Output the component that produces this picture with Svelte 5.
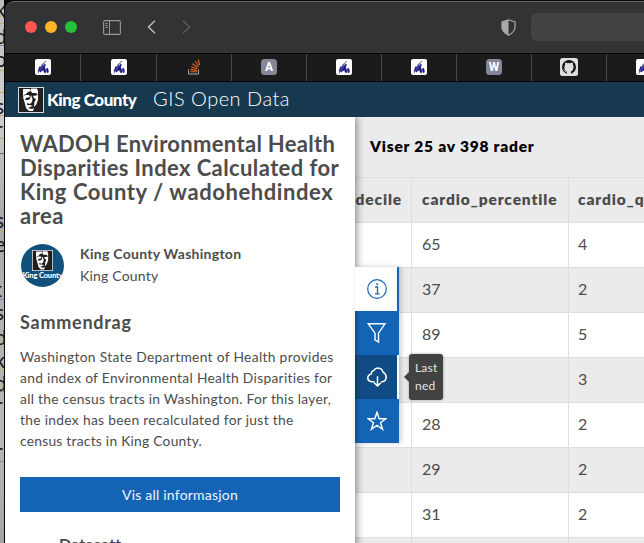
<script>
  const tabs = ['quill', 'quill', 'stack', 'A', 'quill', 'quill', 'W', 'github', 'quill'];
  const rows = [['65', '4'], ['37', '2'], ['89', '5'], ['', '3'], ['28', '2'], ['29', '2'], ['31', '2'], ['', '']];
  const summary = [
    ['Washington State Department of Health provides', 0.32],
    ['and index of Environmental Health Disparities for', 0.3],
    ['all the census tracts in Washington. For this layer,', 0.27],
    ['the index has been recalculated for just the', 0.31],
    ['census tracts in King County.', 0.25]
  ];
  const title = [
    ['WADOH Environmental Health', 0.32],
    ['Disparities Index Calculated for', 0.4],
    ['King County / wadohehdindex', 0.57],
    ['area', 0.5]
  ];
  const notes = [['K', 12], ['d', 37], ['o', 60], ['l', 82], ['s', 107], ['r', 130], ['s', 221], ['e', 245], ['t', 290], ['s', 313], ['d', 338], ['k', 361], ['d', 384], ['r', 406], ['r', 452]];
  const rules = [[23, 'y'], [45, 'b'], [70, 'y'], [92, 'y'], [115, 'y'], [138, 'y'], [153, 'g'], [231, 'y'], [299, 'b'], [346, 'y'], [369, 'y'], [391, 'b'], [461, 'b']];
</script>

{#snippet portrait()}
  <svg class="portrait" viewBox="0 0 26 26">
    <rect x=".5" y=".5" width="25" height="25" fill="#211f1d" stroke="#d8dcde" />
    <path d="M5 2H12L13 4 10 5 8 7 6 8 5 10ZM13 1.5H19L20 4 20 8 18 6 14 6 13 4ZM5 10L7 8 11 8 12 10 8 11 7 13 10 13 12 12 13 8 14.5 12 14 15 12 17 9 16 9 18 12 18 15 19 12 20 10 21 14 22 16 21 15 24 11 24 8 21 7 17ZM15 9L20 8 20 13 18 18 16 20 16.5 15 18 12 16 11Z" fill="#fff" />
  </svg>
{/snippet}

<div class="screen">
  <div class="notes">
    {#each notes as [letter, y]}<span style:top="{y - 10}px">{letter}</span>{/each}
    {#each rules as [y, kind]}<i class={kind} style:top="{y}px"></i>{/each}
  </div>
  <div class="window">
    <div class="toolbar">
      <span class="light red"></span><span class="light amber"></span><span class="light green"></span>
      <svg class="sidebar" viewBox="0 0 18 15" fill="none" stroke="#98999b">
        <rect x=".6" y=".6" width="16.8" height="13.8" rx="1.5" stroke-width="1.1" />
        <path d="M6.5 1V14M2.4 3.5H4.7M2.4 5.5H4.7M2.4 7.5H4.7" />
      </svg>
      <svg class="back" viewBox="0 0 9 14" fill="none" stroke="#b9babb" stroke-width="1.5"><path d="M8 .7 1.5 7 8 13.3" /></svg>
      <svg class="forward" viewBox="0 0 9 14" fill="none" stroke="#5a5b5d" stroke-width="1.4"><path d="M1 .7 7.5 7 1 13.3" /></svg>
      <svg class="shield" viewBox="0 0 15 17">
        <path d="M7.5.8 14 3V9Q13.5 13 7.5 16.2 1.5 13 1 9V3Z" fill="none" stroke="#a9aaab" stroke-width="1.2" />
        <path d="M7.5.8V16.2Q1.5 13 1 9V3Z" fill="#a9aaab" />
      </svg>
      <div class="address"></div>
    </div>
    <div class="tabs">
      {#each tabs as tab}
        <div class="tab">
          {#if tab === 'quill'}
            <svg class="fav" viewBox="0 0 16 16">
              <rect width="16" height="16" rx="2" fill="#fff" />
              <path d="M3.5 12.5 5.5 7.5M5 13 8 6M7 11.5 10 5" stroke="#1e1c86" stroke-width="2" fill="none" />
              <path d="M6 6.5 11 2M3 14.5 4 12" stroke="#4a4a9e" stroke-width=".9" />
              <ellipse cx="9.5" cy="11" rx="1.3" ry="3.2" transform="rotate(-12 9.5 11)" fill="#1e1c86" />
              <ellipse cx="12.4" cy="11.5" rx="1.2" ry="2.5" transform="rotate(-10 12.4 11.5)" fill="#1e1c86" />
              <path d="M3 14.5Q5.5 9 9.5 5" stroke="#a9aad6" stroke-width=".5" fill="none" />
            </svg>
          {:else if tab === 'stack'}
            <svg class="fav" viewBox="0 0 16 16" fill="none">
              <path d="M2.5 10.5V15H12.5V10.5" stroke="#a6a7a8" stroke-width="1" />
              <path d="M4.3 12.7H11M4.4 10.4 11 11.4M5 7.7 11.3 9.8M6.5 4.8 12 8.5M9.2 2.3 12.8 7.3M12.2.5 13.7 6" stroke="#e8641b" stroke-width="1.1" />
            </svg>
          {:else if tab === 'github'}
            <svg class="fav git" viewBox="0 0 18 18">
              <rect width="18" height="18" rx="2.5" fill="#dedede" />
              <circle cx="9" cy="9" r="7" fill="#151515" />
              <path d="M7 16.3V13.5Q4.3 12.5 4.4 9.2 4.4 7.6 5.2 6.8 4.8 5.5 5.3 4.4 6.4 4.4 7.5 5.3 9 4.9 10.6 5.3 11.8 4.4 12.8 4.4 13.2 5.5 12.8 6.8 13.7 7.8 13.6 9.2 13.5 12.5 11 13.5V16.3Z" fill="#dedede" />
              <path d="M3.5 11.8Q4.5 12 5 13T7.3 13.9" stroke="#dedede" stroke-width=".8" fill="none" />
            </svg>
          {:else}
            <span class="fav letter">{tab}</span>
          {/if}
        </div>
      {/each}
    </div>
    <header>
      {@render portrait()}
      <b>King County</b>
      <span class="site">GIS Open Data</span>
    </header>
    <main>
      <aside>
        <h1>{#each title as [line, gap]}<span style:letter-spacing="{gap}px">{line}</span>{/each}</h1>
        <div class="owner">
          <div class="avatar">{@render portrait()}<b>King County</b></div>
          <div class="names"><strong>King County Washington</strong><span>King County</span></div>
        </div>
        <h2>Sammendrag</h2>
        <p>{#each summary as [line, gap]}<span style:letter-spacing="{gap}px">{line}</span>{/each}</p>
        <button>Vis all informasjon</button>
        <h3>Datasett</h3>
      </aside>
      <section>
        <div class="count"><span>Viser 25 av 398 rader</span></div>
        <div class="row head"><div class="c1"><span>decile</span></div><div class="c2"><span>cardio_percentile</span></div><div class="c3"><span>cardio_quintile</span></div></div>
        {#each rows as [a, b]}
          <div class="row"><div class="c1"></div><div class="c2">{a}</div><div class="c3">{b}</div></div>
        {/each}
      </section>
      <nav>
        <div class="act info">
          <svg viewBox="0 0 20 20" fill="none" stroke="#1766b8" stroke-width="1.2"><circle cx="10" cy="10" r="9.3" /><path d="M8.2 8H10.5V14.6M8 14.9H12.7" stroke-width="1.3" /><circle cx="10.1" cy="5.2" r=".7" fill="#1766b8" stroke-width=".6" /></svg>
        </div>
        <div class="act"><svg viewBox="0 0 20 20" fill="none" stroke="#fff" stroke-width="1.4"><path d="M1.3.8H18L11.5 10.2V19L8 16.8V10.2Z" /></svg></div>
        <div class="act current"><svg viewBox="0 0 20 20" fill="none" stroke="#fff" stroke-width="1.5"><path d="M7.5 14.7H4.2Q.8 14 .8 11 .8 7.8 4.2 7 4.3 4 7 3.2 8.2 1 11 1 15 1.2 16 5.2 19.2 6.8 19.2 10.5 19 14 15.7 14.7H14M10.5 9.3V19M7.2 15.7 10.5 19 13.8 15.7" /></svg></div>
        <div class="act"><svg viewBox="0 0 20 20" fill="none" stroke="#fff" stroke-width="1.4"><path d="M10 1.2 12.2 7.7H19L13.5 11.7 15.6 18.3 10 14.3 4.4 18.3 6.5 11.7 1 7.7H7.8Z" /></svg></div>
        <div class="tip">Last<br />ned</div>
      </nav>
    </main>
  </div>
</div>

<style>
  :global(body) { overflow: hidden; }
  .screen { width: 644px; height: 543px; overflow: hidden; position: relative; display: flex; background: #080808; font-family: Lato, "Open Sans", sans-serif; color: #4c4c4c; font-variant-ligatures: none; }
  .screen * { box-sizing: border-box; }
  .notes { width: 5px; flex: none; position: relative; overflow: hidden; background: linear-gradient(#bcbcbd, #d0d0d1 20%, #aaaaac 40%, #b9b9bb 80%, #a4a4a6); border-right: 1px solid #050505; }
  .notes span { position: absolute; left: -5px; font: 19px/20px "Noto Sans", sans-serif; color: #151515; }
  .notes i { position: absolute; left: 0; width: 4px; height: 1px; }
  .y { background: #c6a966; }
  .b { background: #8585a6; }
  .g { background: #6c6c6e; }
  .window { width: 639px; height: 543px; flex: none; display: flex; flex-direction: column; border-top: 1px solid #09090a; }
  .toolbar { height: 52px; flex: none; background: #323335; border-top: 1px solid #69696b; border-radius: 9px 0 0; display: flex; align-items: center; padding-left: 20px; }
  .light { width: 12px; height: 12px; border-radius: 50%; margin-right: 8px; margin-top: -1px; }
  .red { background: #fd5650; }
  .amber { background: #fdb32a; }
  .green { background: #25c138; }
  .toolbar svg { flex: none; margin-top: -1px; }
  .sidebar { width: 18px; height: 15px; margin-left: 18px; }
  .back { width: 9px; height: 14px; margin-left: 26px; }
  .forward { width: 9px; height: 14px; margin-left: 26px; }
  .shield { width: 15px; height: 17px; margin-left: 310px; }
  .address { margin-left: 15px; height: 28px; flex: 1; border-radius: 6px 0 0 6px; background: #414244; margin-top: -1px; }
  .tabs { height: 29px; flex: none; display: flex; border: 1px solid #050505; border-width: 1px 0; background: #1b1b1c; overflow: hidden; }
  .tab { flex: none; width: 75px; border-right: 1px solid #49494a; display: flex; align-items: center; justify-content: center; }
  .tab:first-child, .tab:nth-child(2) { width: 76px; }
  .fav { width: 16px; height: 16px; margin-top: -1px; }
  .tab .git { width: 18px; height: 18px; }
  .letter { background: #858696; color: #fff; border-radius: 3.5px; font: bold 12px/16px Roboto, sans-serif; text-align: center; }
  header { height: 35px; flex: none; background: #17394f; color: #fff; display: flex; align-items: center; padding-left: 13px; overflow: hidden; }
  .portrait { width: 26px; height: 26px; flex: none; display: block; }
  header b { font: 900 17px/24px Lato, sans-serif; letter-spacing: -.45px; width: 92px; margin-left: 3px; margin-top: 1px; white-space: nowrap; }
  .site { font-size: 20px; font-weight: 300; line-height: 24px; margin-left: 14px; letter-spacing: .5px; margin-top: -4px; color: #fff; white-space: nowrap; }
  main { flex: 1; display: flex; position: relative; background: #ebebeb; min-height: 0; overflow: hidden; }
  aside { width: 350px; flex: none; background: #fff; padding: 15px 15px 0; position: relative; z-index: 3; box-shadow: 1px 0 8px rgba(0,0,0,.5); clip-path: inset(0 -12px 0 0); height: 440px; }
  h1, h2, h3, p { margin: 0; }
  h1 { font-size: 22px; line-height: 24px; font-weight: 700; }
  h1 span, p span { display: block; white-space: nowrap; }
  .owner { display: flex; margin-top: 16px; height: 44px; }
  .avatar { width: 43px; height: 43px; margin-left: 1px; border-radius: 50%; background: #10527c; overflow: hidden; display: flex; flex-direction: column; align-items: center; padding-top: 6px; }
  .avatar .portrait { width: 21px; height: 21px; }
  .avatar b { font: 900 7.5px/10px Lato, sans-serif; letter-spacing: -.15px; color: #fff; white-space: nowrap; }
  .names { margin-left: 16px; margin-top: -1px; display: flex; flex-direction: column; font-size: 14px; line-height: 22px; }
  .names strong { font-weight: 700; letter-spacing: .28px; }
  .names span { letter-spacing: .2px; }
  h2 { font-size: 18px; line-height: 24px; margin-top: 22px; font-weight: 700; letter-spacing: .75px; }
  p { font-size: 13.8px; line-height: 21px; margin-top: 12px; }
  button { display: block; width: 320px; height: 35px; border: 0; padding: 0; margin-top: 26px; background: #1464b6; color: #eef4fa; font: 14px/33px Lato, sans-serif; letter-spacing: .2px; }
  h3 { font-size: 16px; line-height: 22px; margin: 21px 0 0 39px; font-weight: 700; letter-spacing: .1px; }
  section { flex: 1; display: flex; flex-direction: column; min-width: 0; overflow: hidden; }
  .count { height: 60px; flex: none; line-height: 59px; padding-left: 15px; color: #000; font-size: 15.5px; font-weight: 800; letter-spacing: .78px; }
  .row { height: 45px; flex: none; display: flex; background: #fff; border-top: 1px solid #dedede; font-size: 16px; line-height: 42px; white-space: nowrap; }
  .row.head { font-size: 15.5px; line-height: 43px; font-weight: 800; letter-spacing: .86px; }
  .row.head, .row:nth-child(2n) { background: #ebebeb; }
  .row.head + .row { background: #fff; }
  .row div { border-right: 1px solid #dedede; flex: none; }
  .c1 { width: 57px; }
  .head .c1 { display: flex; justify-content: flex-end; padding-right: 9px; }
  .c2 { width: 157px; padding-left: 10px; }
  .c3 { width: 120px; padding-left: 9px; }
  nav { position: absolute; left: 350px; top: 150px; width: 44px; z-index: 4; box-shadow: 2px 0 5px rgba(0,0,0,.2); }
  .act { height: 44px; background: #1464b6; display: flex; align-items: center; padding-left: 12px; box-shadow: inset 5px 0 5px -4px rgba(0,0,0,.35); }
  .act svg { width: 20px; height: 20px; display: block; }
  .info { background: #fff; border-right: 2px solid #1464b6; box-shadow: none; }
  .current { background: #104b86; border-right: 2px solid #fff; }
  .tip { position: absolute; left: 54px; top: 87px; width: 34px; height: 46px; border-radius: 3px; background: #424242; color: #e2e2e2; font-size: 12px; line-height: 18px; padding: 5px 6px; box-shadow: 0 0 3px rgba(0,0,0,.35); letter-spacing: .2px; }
  .tip::before { content: ""; position: absolute; left: -5px; top: 18px; border: 5px solid transparent; border-left: 0; border-right-color: #424242; }
</style>
